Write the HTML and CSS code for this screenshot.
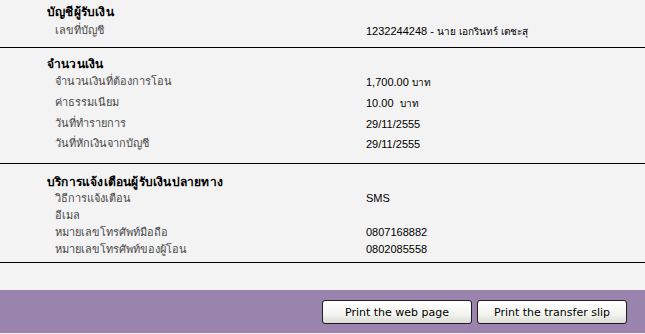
FILE: index.html
```html
<!DOCTYPE html>
<html lang="th">
<head>
  <meta charset="UTF-8">
  <meta name="viewport" content="width=device-width, initial-scale=1.0">
  <title>Transfer Result</title>
  <link rel="stylesheet" href="styles.css">
</head>
<body>
  <div class="page">
    <!-- Receiving account -->
    <section class="block block-account">
      <h2>บัญชีผู้รับเงิน</h2>
      <div class="row">
        <span class="label">เลขที่บัญชี</span>
        <span class="value">1232244248 - <span class="thai">นาย เอกรินทร์ เตชะสุ</span></span>
      </div>
    </section>

    <!-- Amount -->
    <section class="block block-amount">
      <h2>จำนวนเงิน</h2>
      <div class="row">
        <span class="label">จำนวนเงินที่ต้องการโอน</span>
        <span class="value">1,700.00 <span class="thai">บาท</span></span>
      </div>
      <div class="row">
        <span class="label">ค่าธรรมเนียม</span>
        <span class="value">10.00&nbsp; <span class="thai">บาท</span></span>
      </div>
      <div class="row">
        <span class="label">วันที่ทำรายการ</span>
        <span class="value">29/11/2555</span>
      </div>
      <div class="row">
        <span class="label">วันที่หักเงินจากบัญชี</span>
        <span class="value">29/11/2555</span>
      </div>
    </section>

    <!-- Notification -->
    <section class="block block-notify">
      <h2>บริการแจ้งเตือนผู้รับเงินปลายทาง</h2>
      <div class="row">
        <span class="label">วิธีการแจ้งเตือน</span>
        <span class="value">SMS</span>
      </div>
      <div class="row">
        <span class="label">อีเมล</span>
        <span class="value"></span>
      </div>
      <div class="row">
        <span class="label">หมายเลขโทรศัพท์มือถือ</span>
        <span class="value">0807168882</span>
      </div>
      <div class="row">
        <span class="label">หมายเลขโทรศัพท์ของผู้โอน</span>
        <span class="value">0802085558</span>
      </div>
    </section>
  </div>

  <div class="actions">
    <button class="btn" type="button">Print the web page</button>
    <button class="btn" type="button">Print the transfer slip</button>
  </div>
</body>
</html>
```

FILE: styles.css
```css
body {
  margin: 0;
  background-color: #f3f3f3;
  font-family: Tahoma, 'DejaVu Sans', 'Noto Sans', sans-serif;
  font-size: 11px;
  color: #000;
}
.page {
  padding-bottom: 27px;
}
.block {
  border-bottom: 1px solid #000;
}
.block h2 {
  margin: 0;
  padding-left: 47px;
  font-size: 12px;
  font-weight: bold;
  letter-spacing: 0.2px;
  line-height: 16px;
  color: #000;
}
.row {
  display: grid;
  grid-template-columns: 311px 1fr;
  padding-left: 55px;
}
.label {
  color: #4a4a4a;
}
.value {
  font-family: 'Liberation Sans', Arial, sans-serif;
  font-size: 11px;
  color: #000;
}
.value .thai {
  font-family: Tahoma, 'DejaVu Sans', sans-serif;
  font-size: 10px;
}
.block-account {
  height: 48px;
  box-sizing: border-box;
  padding-top: 4px;
}
.block-account .row {
  margin-top: 3px;
  line-height: 16px;
}
.block-amount {
  height: 116px;
  box-sizing: border-box;
  padding-top: 8px;
}
.block-amount .row {
  line-height: 20px;
}
.block-notify {
  height: 99px;
  box-sizing: border-box;
  padding-top: 10px;
}
.block-notify .row {
  line-height: 17px;
}
.actions {
  height: 43px;
  box-sizing: border-box;
  background-color: #9a84ad;
  display: flex;
  justify-content: flex-end;
  align-items: flex-start;
  gap: 5px;
  padding: 10px 18px 0 0;
}
.btn {
  width: 150px;
  height: 24px;
  padding: 0;
  border: 1px solid #1c1c1c;
  border-radius: 3px;
  background: linear-gradient(#ffffff, #f4f4f0 60%, #dcdcd6);
  font-family: Tahoma, 'DejaVu Sans', sans-serif;
  font-size: 11px;
  color: #000;
  cursor: pointer;
}
```
